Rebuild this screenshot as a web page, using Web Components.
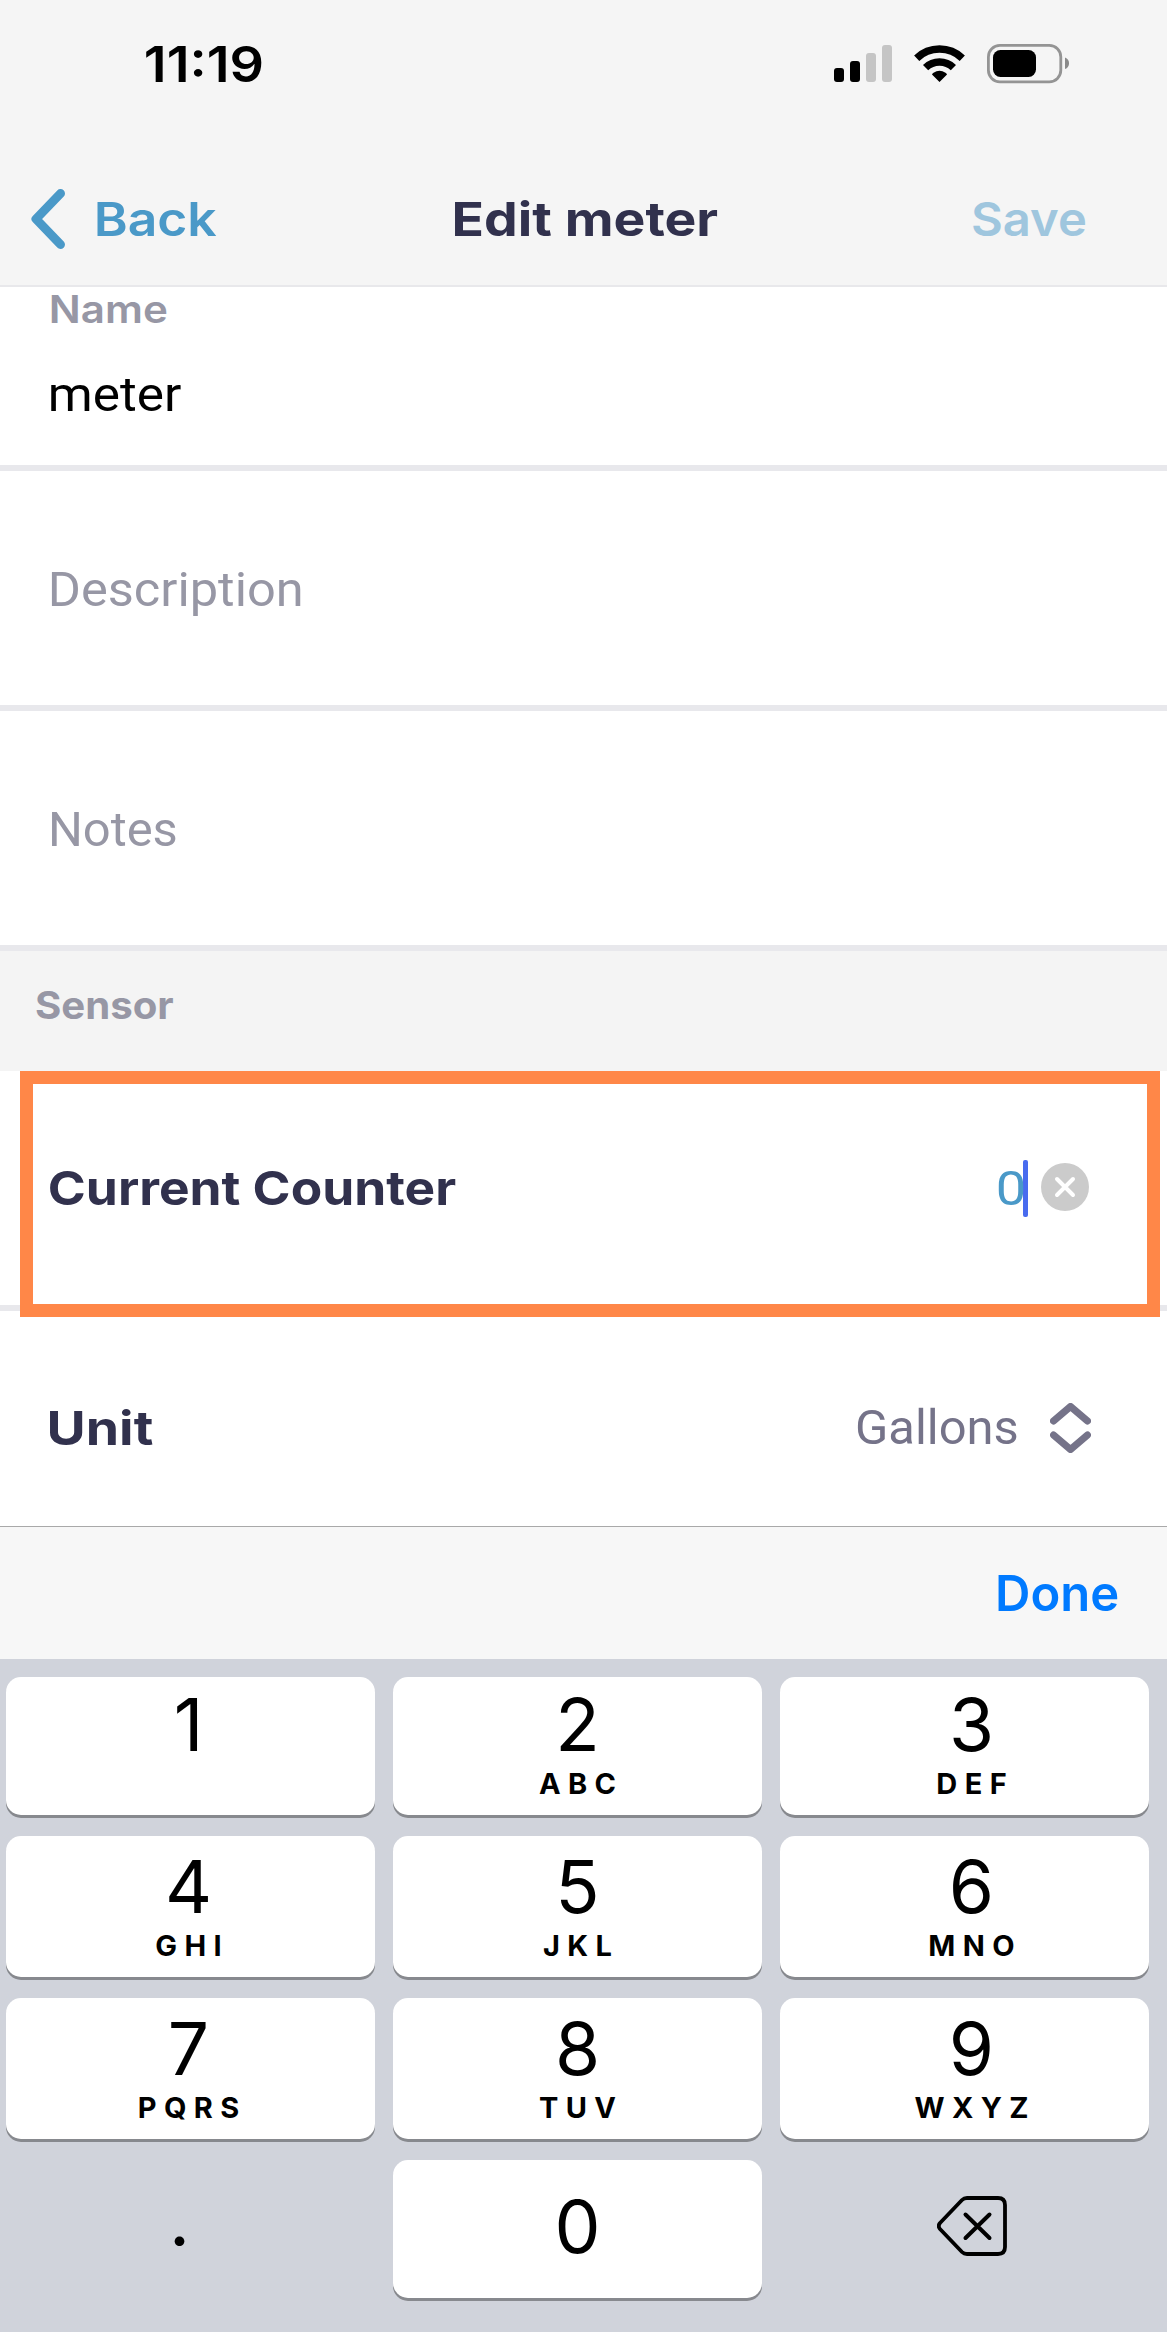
<!DOCTYPE html>
<html lang="en">
  <head>
    <meta charset="utf-8" />
    <meta name="viewport" content="width=device-width" />
    <title>Edit meter</title>
    <style>
      body {
        margin: 0;
        font-family: "Inter", "Liberation Sans", sans-serif;
        background: #fff;
        color: #000;
      }
    </style>
  </head>
  <body>
    <meter-screen></meter-screen>

    <template id="fitTextTemplate">
      <style>
        :host {
          display: block;
          flex: none;
          line-height: 1;
          white-space: nowrap;
        }
        span {
          display: block;
          width: max-content;
          transform-origin: 0 0;
        }
      </style>
      <span><slot></slot></span>
    </template>

    <template id="statusBarTemplate">
      <style>
        :host {
          display: flex;
          align-items: center;
          box-sizing: border-box;
          height: 128px;
          padding: 0 98px 0 146px;
        }
        .time {
          font-size: 50px;
          font-weight: 600;
        }
        svg {
          display: block;
        }
        .signal {
          margin-left: auto;
        }
        .wifi {
          margin: 0 22px;
        }
      </style>
      <fit-text class="time" width="116">11:19</fit-text>
      <svg class="signal" width="58" height="40" viewBox="834 44 58 40">
        <rect x="834" y="68" width="10" height="14" rx="3" />
        <rect x="850" y="61" width="10" height="21" rx="3" />
        <rect x="866" y="53" width="10" height="29" rx="3" fill="#c5c5c5" />
        <rect x="882" y="45" width="10" height="37" rx="3" fill="#c5c5c5" />
      </svg>
      <svg class="wifi" width="51" height="40" viewBox="914 44 51 40">
        <g fill="none" stroke="#000" stroke-width="7.500">
          <path d="M916.7 58.2 A33 33 0 0 1 962.3 58.2" />
          <path d="M925.6 67.6 A20 20 0 0 1 953.4 67.6" />
        </g>
        <path d="M932 74.5 Q932 73.6 933.5 72.7 Q939.5 69 945.5 72.7 Q947 73.6 947 74.5 L939.5 82 Z" />
      </svg>
      <svg width="82" height="40" viewBox="987 44 82 40">
        <rect x="988.4" y="45.4" width="72.4" height="36.4" rx="11.5" fill="none" stroke="#949494" stroke-width="2.8" />
        <rect x="993" y="50" width="43" height="27" rx="7.5" />
        <path d="M1065 57.5 Q1069 59 1069 63.2 Q1069 67.5 1065 69 Z" fill="#8a8a8a" />
      </svg>
    </template>

    <template id="navBarTemplate">
      <style>
        :host {
          display: flex;
          align-items: center;
          height: 132px;
          margin-top: 25px;
          padding: 0 82px 0 31px;
          font-size: 47px;
          border-bottom: 2px solid #e8e8eb;
        }
        fit-text {
          margin-bottom: 2px;
        }
        .back {
          display: flex;
          align-items: center;
          gap: 32px;
          color: #4a99c8;
          font-weight: 600;
        }
        .title {
          margin-left: 238px;
          color: #31314d;
          font-weight: 700;
        }
        .save {
          margin-left: auto;
          color: #9fc6de;
          font-weight: 600;
        }
      </style>
      <div class="back">
        <svg width="34" height="60" viewBox="0 0 34 60">
          <path d="M29.5 4.5 L5 30 L29.5 55.5" fill="none" stroke="currentColor" stroke-width="9" stroke-linecap="round" stroke-linejoin="round" />
        </svg>
        <fit-text width="120">Back</fit-text>
      </div>
      <fit-text class="title" width="263">Edit meter</fit-text>
      <fit-text class="save" width="112">Save</fit-text>
    </template>

    <template id="formRowTemplate">
      <style>
        :host {
          position: relative;
          display: flex;
          flex: none;
          align-items: center;
          box-sizing: border-box;
          height: 240px;
          padding: 0 73px 0 51px;
          background: #fff;
          border-bottom: 6px solid #e8e8ec;
        }
        :host([stacked]) {
          display: block;
          height: 184px;
        }
        .end {
          display: flex;
          align-items: center;
          margin-left: auto;
        }
      </style>
      <slot></slot>
      <div class="end"><slot name="end"></slot></div>
    </template>

    <template id="sectionTitleTemplate">
      <style>
        :host {
          display: flex;
          flex: none;
          align-items: center;
          box-sizing: border-box;
          height: 120px;
          padding: 0 36px 11px;
          background: #f4f4f4;
          color: #9797a5;
          font-size: 38.5px;
          font-weight: 700;
        }
      </style>
      <slot></slot>
    </template>

    <template id="keyCapTemplate">
      <style>
        :host {
          display: flex;
          flex-direction: column;
          align-items: center;
          box-sizing: border-box;
          padding-top: 11px;
          border-radius: 15px;
          background: #fff;
          box-shadow: 0 3px 0 #87898e;
          line-height: 1;
        }
        :host([tall]) {
          padding-top: 14px;
        }
        :host([plain]) {
          background: none;
          box-shadow: none;
        }
        :host([single]) {
          justify-content: center;
          padding: 0 0 6px;
        }
        .digit {
          font-size: 73px;
          transform: translateX(var(--shift, 0));
        }
        .letters {
          margin-top: 8px;
          font-size: 29px;
          font-weight: 700;
          letter-spacing: 7.4px;
          padding-left: 7.4px;
          line-height: 30px;
          transform: translateX(var(--shift, 0));
        }
      </style>
      <div class="digit"><slot></slot></div>
      <div class="letters"></div>
    </template>

    <template id="keyPadTemplate">
      <style>
        :host {
          display: block;
          border-top: 1px solid #a9a9a9;
        }
        .toolbar {
          display: flex;
          align-items: center;
          justify-content: flex-end;
          box-sizing: border-box;
          height: 132px;
          padding: 2px 49px 0 0;
          background: #f7f7f7;
          color: #007aff;
          font-size: 49.5px;
          font-weight: 600;
        }
        .keys {
          display: grid;
          grid-template-columns: repeat(3, 369px);
          grid-template-rows: 138px 141px 141px 138px;
          gap: 21px 18px;
          box-sizing: border-box;
          height: 673px;
          padding: 18px 0 0 6px;
          background: #d0d3db;
        }
        .left {
          --shift: -2px;
        }
        .right {
          --shift: 7px;
        }
        .dot {
          display: block;
          margin: -14px 22px 0 0;
        }
        .erase {
          display: block;
          margin: 0 0 0 15px;
        }
      </style>
      <div class="toolbar"><fit-text width="120">Done</fit-text></div>
      <div class="keys">
        <key-cap class="left">1</key-cap>
        <key-cap letters="ABC">2</key-cap>
        <key-cap class="right" letters="DEF">3</key-cap>
        <key-cap class="left" tall letters="GHI">4</key-cap>
        <key-cap tall letters="JKL">5</key-cap>
        <key-cap class="right" tall letters="MNO">6</key-cap>
        <key-cap class="left" tall letters="PQRS">7</key-cap>
        <key-cap tall letters="TUV">8</key-cap>
        <key-cap class="right" tall letters="WXYZ">9</key-cap>
        <key-cap plain single><span class="dot">.</span></key-cap>
        <key-cap single>0</key-cap>
        <key-cap plain single>
          <svg class="erase" width="70" height="60" viewBox="0 0 70 60" fill="none" stroke="#000" stroke-linejoin="round" stroke-linecap="round">
            <path d="M30 2 H61 Q68 2 68 9 V51 Q68 58 61 58 H30 Q27 58 25 56 L3 33 Q0.5 30 3 27 L25 4 Q27 2 30 2 Z" stroke-width="3.8" />
            <path d="M28.5 18.5 L52.5 42 M52.5 18.5 L28.5 42" stroke-width="4" />
          </svg>
        </key-cap>
      </div>
    </template>

    <template id="meterScreenTemplate">
      <style>
        :host {
          display: flex;
          flex-direction: column;
          width: 1167px;
          height: 2332px;
          overflow: hidden;
        }
        header {
          background: #f5f5f5;
        }
        main {
          display: flex;
          flex-direction: column;
          flex: 1;
          min-height: 0;
          overflow: hidden;
        }
        .name {
          padding: 3px 0 42px;
          color: #9797a5;
          font-size: 38.5px;
          font-weight: 600;
        }
        .value,
        .hint,
        .unit,
        .count {
          font-family: "Roboto", "Liberation Sans", sans-serif;
          font-size: 48px;
        }
        .hint {
          color: #9797a5;
          margin-top: 3px;
        }
        .label {
          color: #31314d;
          font-size: 47px;
          font-weight: 700;
          margin: 0 0 2px -1px;
        }
        .count {
          color: #4a99c8;
          margin-top: 2px;
        }
        .caret {
          width: 5px;
          height: 57px;
          margin: 0 13px 0 -1px;
          border-radius: 2px;
          background: #486bef;
        }
        .clear {
          margin: -3px 5px 0 0;
        }
        .unit {
          color: #757389;
          margin-right: 33px;
        }
        .arrows {
          margin-right: 3px;
        }
        /* frame drawn over the counter row and its bottom line */
        .frame {
          position: absolute;
          left: 20px;
          right: 7px;
          top: 0;
          height: 246px;
          box-sizing: border-box;
          border: 13px solid #ff8748;
          z-index: 1;
        }
      </style>
      <header>
        <status-bar></status-bar>
        <nav-bar></nav-bar>
      </header>
      <main>
        <form-row stacked>
          <fit-text class="name" width="116">Name</fit-text>
          <fit-text class="value" width="130">meter</fit-text>
        </form-row>
        <form-row><fit-text class="hint" width="250">Description</fit-text></form-row>
        <form-row><fit-text class="hint" width="125">Notes</fit-text></form-row>
        <section-title><fit-text width="137">Sensor</fit-text></section-title>
        <form-row>
          <fit-text class="label" width="406">Current Counter</fit-text>
          <fit-text slot="end" class="count" width="26">0</fit-text>
          <div slot="end" class="caret"></div>
          <svg slot="end" class="clear" width="48" height="48" viewBox="0 0 48 48">
            <circle cx="24" cy="24" r="24" fill="#cbcbcb" />
            <path d="M16 16 L32 32 M32 16 L16 32" stroke="#fff" stroke-width="4" stroke-linecap="round" />
          </svg>
          <div class="frame"></div>
        </form-row>
        <form-row>
          <fit-text class="label" width="103">Unit</fit-text>
          <fit-text slot="end" class="unit" width="160">Gallons</fit-text>
          <svg slot="end" class="arrows" width="41" height="50" viewBox="0 0 41 50" fill="none" stroke="#757389" stroke-width="7" stroke-linecap="round" stroke-linejoin="round">
            <path d="M3.5 18 L20.5 3.5 L37.5 18" />
            <path d="M3.5 32 L20.5 46.5 L37.5 32" />
          </svg>
        </form-row>
      </main>
      <key-pad></key-pad>
    </template>

    <script>
      class TemplateElement extends HTMLElement {
        constructor(id) {
          super();
          var content = document.getElementById(id).content.cloneNode(true);
          this.attachShadow({ mode: "open" }).appendChild(content);
        }
      }

      // one line of text whose visible glyphs span exactly `width` pixels
      class FitText extends TemplateElement {
        constructor() {
          super("fitTextTemplate");
        }
        connectedCallback() {
          var style = getComputedStyle(this);
          var ctx = document.createElement("canvas").getContext("2d");
          ctx.font = style.fontWeight + " " + style.fontSize + " " + style.fontFamily;
          var box = ctx.measureText(this.textContent);
          var width = Number(this.getAttribute("width"));
          var scale = width / (box.actualBoundingBoxRight + box.actualBoundingBoxLeft);
          this.style.width = width + "px";
          this.shadowRoot.querySelector("span").style.transform =
            "scaleX(" + scale + ") translateX(" + box.actualBoundingBoxLeft + "px)";
        }
      }

      class KeyCap extends TemplateElement {
        constructor() {
          super("keyCapTemplate");
        }
        connectedCallback() {
          var letters = this.shadowRoot.querySelector(".letters");
          if (this.hasAttribute("letters")) {
            letters.textContent = this.getAttribute("letters");
          } else {
            letters.style.display = "none";
          }
        }
      }

      class StatusBar extends TemplateElement {
        constructor() {
          super("statusBarTemplate");
        }
      }
      class NavBar extends TemplateElement {
        constructor() {
          super("navBarTemplate");
        }
      }
      class FormRow extends TemplateElement {
        constructor() {
          super("formRowTemplate");
        }
      }
      class SectionTitle extends TemplateElement {
        constructor() {
          super("sectionTitleTemplate");
        }
      }
      class KeyPad extends TemplateElement {
        constructor() {
          super("keyPadTemplate");
        }
      }
      class MeterScreen extends TemplateElement {
        constructor() {
          super("meterScreenTemplate");
        }
      }

      customElements.define("status-bar", StatusBar);
      customElements.define("nav-bar", NavBar);
      customElements.define("form-row", FormRow);
      customElements.define("section-title", SectionTitle);
      customElements.define("key-cap", KeyCap);
      customElements.define("key-pad", KeyPad);
      customElements.define("fit-text", FitText);
      customElements.define("meter-screen", MeterScreen);
    </script>
  </body>
</html>
